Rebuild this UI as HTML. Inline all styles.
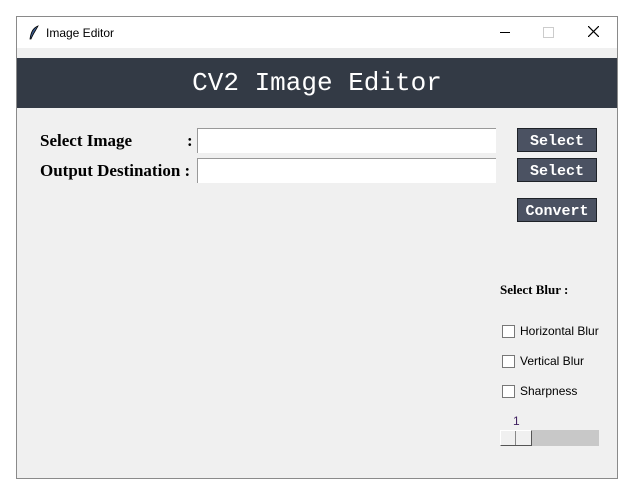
<!DOCTYPE html>
<html><head><style>
body{margin:0;width:637px;height:499px;background:#fff;position:relative;overflow:hidden;font-family:"Liberation Sans",sans-serif}
.win{position:absolute;left:16px;top:16px;width:600px;height:461px;border:1px solid #8a8a8a;background:#f0f0f0}
.tb{position:absolute;left:0;top:0;width:600px;height:31px;background:#fff;font-size:12px}
.hdr{position:absolute;left:0;top:41px;width:600px;height:50px;background:#333a45;color:#fff;font:26px "Courier New","Liberation Mono",monospace;text-align:center;line-height:50px}
.lbl{position:absolute;font:bold 17px "Liberation Serif",serif;color:#000}
.ent{position:absolute;left:180px;width:298px;height:24px;background:#fff;border-top:1px solid #999;border-left:1px solid #999}
.btn{position:absolute;left:500px;width:78px;height:22px;background:#4b5262;border:1px solid #1e2228;color:#fff;font:bold 15px "Liberation Mono",monospace;text-align:center;line-height:25px}
.cb{position:absolute;left:485px;width:11px;height:11px;border:1px solid #777;background:#fff}
.ct{position:absolute;left:503px;font-size:12px}
</style></head><body>
<div class="win">
<div class="tb">
<svg style="position:absolute;left:11px;top:8px" width="12" height="15"><path d="M10 1 C5 3 3 7 2 14 L3 14 C5 9 8 5 10 1Z" fill="#3a5a8a" stroke="#000" stroke-width="0.8"/></svg>
<span style="position:absolute;left:29px;top:9px">Image Editor</span>
<span style="position:absolute;left:483px;top:15px;width:10px;height:1px;background:#000"></span>
<span style="position:absolute;left:526px;top:10px;width:9px;height:9px;border:1px solid #ccc"></span>
<svg style="position:absolute;left:571px;top:9px" width="11" height="11"><path d="M0 0L11 11M11 0L0 11" stroke="#000" stroke-width="1.2"/></svg>
</div>
<div class="hdr">CV2 Image Editor</div>
<div class="lbl" style="left:23px;top:114px">Select Image</div>
<div class="lbl" style="left:170px;top:114px">:</div>
<div class="lbl" style="left:23px;top:144px">Output Destination :</div>
<div class="ent" style="top:111px"></div>
<div class="ent" style="top:141px"></div>
<div class="btn" style="top:111px">Select</div>
<div class="btn" style="top:141px">Select</div>
<div class="btn" style="top:181px">Convert</div>
<div class="lbl" style="left:483px;top:265px;font-size:13px">Select Blur :</div>
<div class="cb" style="top:308px"></div><div class="ct" style="top:307px">Horizontal Blur</div>
<div class="cb" style="top:338px"></div><div class="ct" style="top:337px">Vertical Blur</div>
<div class="cb" style="top:368px"></div><div class="ct" style="top:367px">Sharpness</div>
<div style="position:absolute;left:496px;top:397px;font-size:12px;color:#402060">1</div>
<div style="position:absolute;left:483px;top:413px;width:99px;height:16px;background:#c8c8c8"></div>
<div style="position:absolute;left:483px;top:413px;width:30px;height:14px;background:#f0f0f0;border:1px solid #555;border-top-color:#fff;border-left-color:#fff"></div>
<div style="position:absolute;left:498px;top:414px;width:1px;height:14px;background:#888"></div>
</div>
</body></html>
